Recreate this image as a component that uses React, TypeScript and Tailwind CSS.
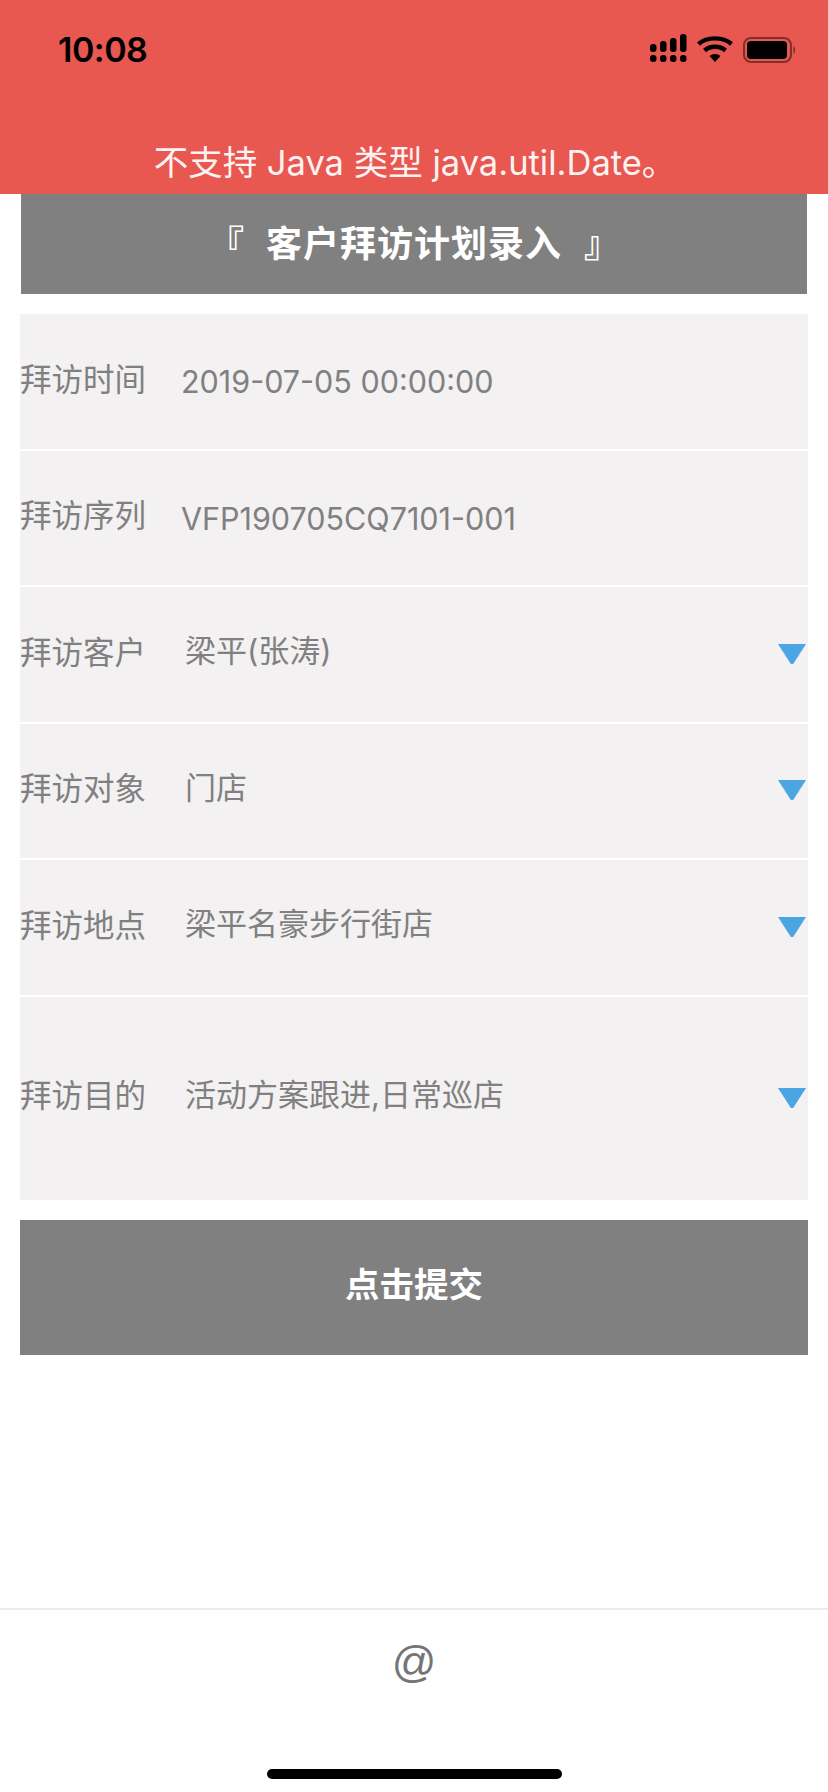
import React from 'react';

const fontStack = "font-['Inter','Noto_Sans_CJK_SC',sans-serif]";

interface RowProps {
  label: string;
  value: string;
  select?: boolean;
  tall?: boolean;
}

const rows: RowProps[] = [
  { label: '拜访时间', value: '2019-07-05 00:00:00' },
  { label: '拜访序列', value: 'VFP190705CQ7101-001' },
  { label: '拜访客户', value: '梁平(张涛)', select: true },
  { label: '拜访对象', value: '门店', select: true },
  { label: '拜访地点', value: '梁平名豪步行街店', select: true },
  { label: '拜访目的', value: '活动方案跟进,日常巡店', select: true, tall: true },
];

const StatusIcons = () => (
  <svg width="146" height="30" viewBox="0 0 146 30" className="block">
    {/* signal */}
    <g fill="#000">
      <rect x="0" y="11" width="6.5" height="8" rx="3" />
      <rect x="10" y="8" width="6.5" height="11" rx="3" />
      <rect x="20" y="5" width="6.5" height="14" rx="3" />
      <rect x="30" y="1" width="6.5" height="18" rx="3" />
      <rect x="0" y="22" width="6.5" height="7" rx="3" />
      <rect x="10" y="22" width="6.5" height="7" rx="3" />
      <rect x="20" y="22" width="6.5" height="7" rx="3" />
      <rect x="30" y="22" width="6.5" height="7" rx="3" />
    </g>
    {/* wifi */}
    <g fill="none" stroke="#000" strokeWidth="4.4">
      <path d="M48.5 11 C57 3.5 73 3.5 81.500 11" />
      <path d="M54.500 17.500 C60 12.500 70 12.500 75.500 17.500" />
    </g>
    <path d="M59.500 23 C62.500 20.300 67.500 20.300 70.500 23 L65 29 Z" fill="#000" />
    {/* battery */}
    <rect x="94" y="5" width="47" height="24" rx="7" fill="none" stroke="#000" strokeOpacity="0.45" strokeWidth="2" />
    <rect x="97" y="8" width="40" height="18" rx="4" fill="#000" />
    <path d="M143.500 13 C145.500 14 145.500 20 143.500 21 Z" fill="#000" fillOpacity="0.5" />
  </svg>
);

const Caret = () => (
  <svg width="30" height="21" viewBox="0 0 30 21" className="block">
    <path d="M1 0 H29 L16.500 19.500 Q15 21 13.500 19.500 Z" fill="#4BA5E3" />
  </svg>
);

const FormRow: React.FC<RowProps> = ({ label, value, select, tall }) => (
  <div className={`flex items-center justify-between bg-[#f3f1f2] pr-px ${tall ? 'h-[203px]' : 'h-[134.5px]'}`}>
    <div className="flex items-center">
      <span className="w-[161px] pb-1 text-[31.5px] text-[#808080]">{label}</span>
      <span className={select ? 'ml-1 pb-1.5 text-[31px] text-[#808080]' : 'pt-0.5 text-[30.5px] text-[#808080]'}>{value}</span>
    </div>
    {select && <Caret />}
  </div>
);

export default function App() {
  return (
    <div className={`flex h-[1792px] w-[828px] flex-col overflow-hidden bg-white ${fontStack}`}>
      <div className="flex h-[194px] flex-col bg-[#e85750]">
        <div className="flex items-start justify-between pl-[58px] pr-8 pt-[33px]">
          <span className="text-[34px] leading-[34px] font-semibold tracking-[-0.5px] text-black">10:08</span>
          <StatusIcons />
        </div>
        <div className="mt-auto pb-2 pl-0.5 text-center text-[34.5px] leading-[46px] text-[#fdf3f2]">
          不支持 Java 类型 java.util.Date。
        </div>
      </div>

      <div className="flex flex-col px-5">
        <div className="mx-px flex h-[100px] items-center justify-center gap-[22px] bg-[#808080] text-[36px] font-bold text-white">
          <span>『</span>
          <span className="tracking-[1px]">客户拜访计划录入</span>
          <span>』</span>
        </div>

        <div className="mt-5 flex flex-col gap-0.5">
          {rows.map(row => (
            <FormRow key={row.label} {...row} />
          ))}
        </div>

        <button className="mt-5 h-[135px] bg-[#808080] pb-1 text-[34.5px] font-bold text-white">点击提交</button>
      </div>

      <div className="mt-auto flex h-[184px] flex-col items-center border-t-2 border-[#ececec]">
        <span className="mt-[17px] font-['Liberation_Sans',sans-serif] text-[44px] leading-[70px] text-[#757575]">@</span>
        <div className="mt-auto mb-[13px] h-2.5 w-[295px] rounded-full bg-black" />
      </div>
    </div>
  );
}
